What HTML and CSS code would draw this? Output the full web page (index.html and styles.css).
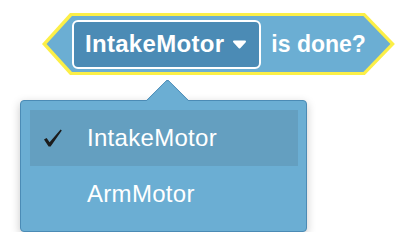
FILE: index.html
```html
<!DOCTYPE html>
<html lang="en">
<head>
    <meta charset="UTF-8">
    <title>IntakeMotor is done?</title>
    <link rel="stylesheet" href="styles.css">
</head>
<body>
    <div class="stage">
        <div class="block">
            <div class="block-body">
                <div class="field">
                    <span class="field-text">IntakeMotor</span>
                    <svg class="caret" width="15" height="9" viewBox="0 0 15 9">
                        <path d="M2 1.5 L13 1.5 L7.5 7.5 Z" fill="#fff" stroke="#fff" stroke-width="2" stroke-linejoin="round"/>
                    </svg>
                </div>
                <span class="block-text">is done?</span>
            </div>
        </div>

        <div class="menu">
            <div class="menu-item selected">
                <span class="check">
                    <svg width="20" height="18" viewBox="0 0 20 18">
                        <path d="M1 10.5 L3.6 9 L6.6 13.2 L17.6 0.6 L18.8 1.4 L7.6 17.4 L5.6 17.4 Z" fill="#1c1c1c"/>
                    </svg>
                </span>
                IntakeMotor
            </div>
            <div class="menu-item">
                <span class="check"></span>
                ArmMotor
            </div>
        </div>
    </div>
</body>
</html>
```

FILE: styles.css
```css
body {
    margin: 0;
    background: #fff;
    font-family: "Liberation Sans", Arial, sans-serif;
    color: #fff;
}

.stage {
    display: flex;
    flex-direction: column;
    align-items: flex-start;
    padding: 13px 0 0 20px;
}

/* hexagon block with yellow glow */
.block {
    margin-left: 22px;
    height: 62px;
    padding: 3px;
    box-sizing: border-box;
    background: #fcef47;
    clip-path: polygon(28px 0, calc(100% - 30px) 0, 100% 50%, calc(100% - 30px) 100%, 28px 100%, 0 50%);
}

.block-body {
    height: 56px;
    display: flex;
    align-items: center;
    gap: 10px;
    padding: 0 26px 0 27px;
    background: #6baed3;
    clip-path: polygon(27px 0, calc(100% - 28.5px) 0, calc(100% - 1.5px) 50%, calc(100% - 28.5px) 100%, 27px 100%, 1.5px 50%);
}

.field {
    height: 49px;
    box-sizing: border-box;
    display: flex;
    align-items: center;
    gap: 8px;
    padding: 0 12px 0 11px;
    border: 2px solid #fff;
    border-radius: 6px;
    background: #4b8bb5;
    font-weight: bold;
    font-size: 24px;
    letter-spacing: 0.3px;
}

.caret {
    display: block;
}

.block-text {
    font-weight: bold;
    font-size: 23px;
}

/* dropdown */
.menu {
    position: relative;
    margin-top: 25px;
    width: 287px;
    box-sizing: border-box;
    padding: 9px 8px 9px 9px;
    border: 1px solid #4b8bb5;
    border-radius: 4px;
    background: #6baed3;
    box-shadow: 0 3px 10px rgba(0, 0, 0, 0.22);
}

.menu::before {
    content: "";
    position: absolute;
    left: 131px;
    top: -16px;
    width: 30px;
    height: 30px;
    background: #6baed3;
    border-top: 1px solid #4b8bb5;
    border-left: 1px solid #4b8bb5;
    border-top-left-radius: 4px;
    transform: rotate(45deg);
}

.menu-item {
    position: relative;
    height: 56px;
    display: flex;
    align-items: center;
    padding-left: 13px;
    font-size: 24px;
    letter-spacing: 0.3px;
}

.menu-item.selected {
    background: #649fc0;
}

.check {
    width: 44px;
    display: flex;
    align-items: center;
}
```
